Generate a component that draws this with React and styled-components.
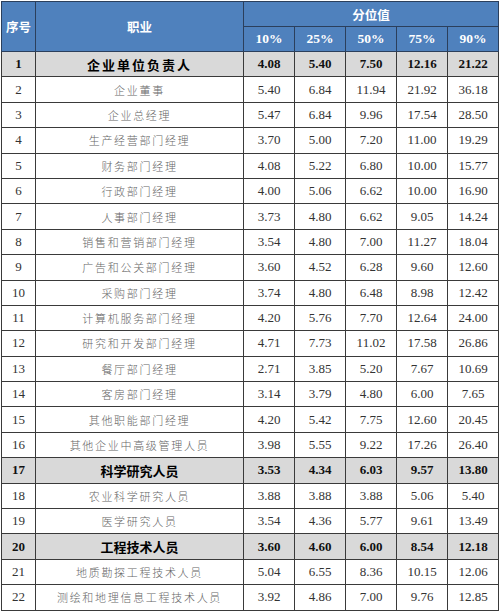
import React from "react";
import styled, { createGlobalStyle } from "styled-components";

const Global = createGlobalStyle`
  html, body { margin: 0; padding: 0; background: #fff; }
  body { font-family: "Liberation Serif", "Noto Sans CJK SC", serif; }
`;

const Page = styled.div`
  padding: 1px 0 0 1px;
`;

const Table = styled.table`
  border-collapse: collapse;
  table-layout: fixed;
  width: 497px;
`;

const HeadCell = styled.th`
  background: #4f81bd;
  color: #fff;
  border: 1px solid #2b3f5c;
  height: 24px;
  padding: 0;
  text-align: center;
  font-weight: 700;
  font-family: ${(p) =>
    p.$num
      ? '"Liberation Serif", serif'
      : '"Noto Sans CJK SC", sans-serif'};
  font-size: ${(p) => (p.$num ? 13.5 : 12.5)}px;
`;

const Row = styled.tr`
  height: 25.4px;
  background: ${(p) => (p.$cat ? "#d9d9d9" : "#fff")};
`;

const Cell = styled.td`
  border: 1px solid #3a3a3a;
  padding: 0;
  text-align: center;
  height: 24.4px;
  font-family: "Liberation Serif", serif;
  font-size: 13px;
  font-weight: ${(p) => (p.$cat ? 700 : 400)};
  color: ${(p) => (p.$cat ? "#111" : "#333")};
`;

const NameCell = styled(Cell)`
  font-family: "Noto Sans CJK SC", sans-serif;
  font-size: ${(p) => (p.$cat ? 13 : 11)}px;
  letter-spacing: ${(p) => (p.$cat ? (p.$wide ? 2 : 0) : 1.7)}px;
  color: ${(p) => (p.$cat ? "#000" : "#666")};
  font-weight: ${(p) => (p.$cat ? 700 : 300)};
`;

const rows = [
  [1, "企业单位负责人", "4.08", "5.40", "7.50", "12.16", "21.22", true],
  [2, "企业董事", "5.40", "6.84", "11.94", "21.92", "36.18"],
  [3, "企业总经理", "5.47", "6.84", "9.96", "17.54", "28.50"],
  [4, "生产经营部门经理", "3.70", "5.00", "7.20", "11.00", "19.29"],
  [5, "财务部门经理", "4.08", "5.22", "6.80", "10.00", "15.77"],
  [6, "行政部门经理", "4.00", "5.06", "6.62", "10.00", "16.90"],
  [7, "人事部门经理", "3.73", "4.80", "6.62", "9.05", "14.24"],
  [8, "销售和营销部门经理", "3.54", "4.80", "7.00", "11.27", "18.04"],
  [9, "广告和公关部门经理", "3.60", "4.52", "6.28", "9.60", "12.60"],
  [10, "采购部门经理", "3.74", "4.80", "6.48", "8.98", "12.42"],
  [11, "计算机服务部门经理", "4.20", "5.76", "7.70", "12.64", "24.00"],
  [12, "研究和开发部门经理", "4.71", "7.73", "11.02", "17.58", "26.86"],
  [13, "餐厅部门经理", "2.71", "3.85", "5.20", "7.67", "10.69"],
  [14, "客房部门经理", "3.14", "3.79", "4.80", "6.00", "7.65"],
  [15, "其他职能部门经理", "4.20", "5.42", "7.75", "12.60", "20.45"],
  [16, "其他企业中高级管理人员", "3.98", "5.55", "9.22", "17.26", "26.40"],
  [17, "科学研究人员", "3.53", "4.34", "6.03", "9.57", "13.80", true],
  [18, "农业科学研究人员", "3.88", "3.88", "3.88", "5.06", "5.40"],
  [19, "医学研究人员", "3.54", "4.36", "5.77", "9.61", "13.49"],
  [20, "工程技术人员", "3.60", "4.60", "6.00", "8.54", "12.18", true],
  [21, "地质勘探工程技术人员", "5.04", "6.55", "8.36", "10.15", "12.06"],
  [22, "测绘和地理信息工程技术人员", "3.92", "4.86", "7.00", "9.76", "12.85"],
];

const cols = [34, 208, 51, 51, 51, 51, 51];

export default function App() {
  return (
    <Page>
      <Global />
      <Table>
        <colgroup>
          {cols.map((w, i) => (
            <col key={i} style={{ width: w }} />
          ))}
        </colgroup>
        <thead>
          <tr>
            <HeadCell rowSpan={2}>序号</HeadCell>
            <HeadCell rowSpan={2}>职业</HeadCell>
            <HeadCell colSpan={5}>分位值</HeadCell>
          </tr>
          <tr>
            {["10%", "25%", "50%", "75%", "90%"].map((t) => (
              <HeadCell key={t} $num>
                {t}
              </HeadCell>
            ))}
          </tr>
        </thead>
        <tbody>
          {rows.map((r) => {
            const cat = !!r[7];
            return (
              <Row key={r[0]} $cat={cat}>
                <Cell $cat={cat}>{r[0]}</Cell>
                <NameCell $cat={cat} $wide={r[0] === 1}>
                  {r[1]}
                </NameCell>
                {r.slice(2, 7).map((v, i) => (
                  <Cell key={i} $cat={cat}>
                    {v}
                  </Cell>
                ))}
              </Row>
            );
          })}
        </tbody>
      </Table>
    </Page>
  );
}
